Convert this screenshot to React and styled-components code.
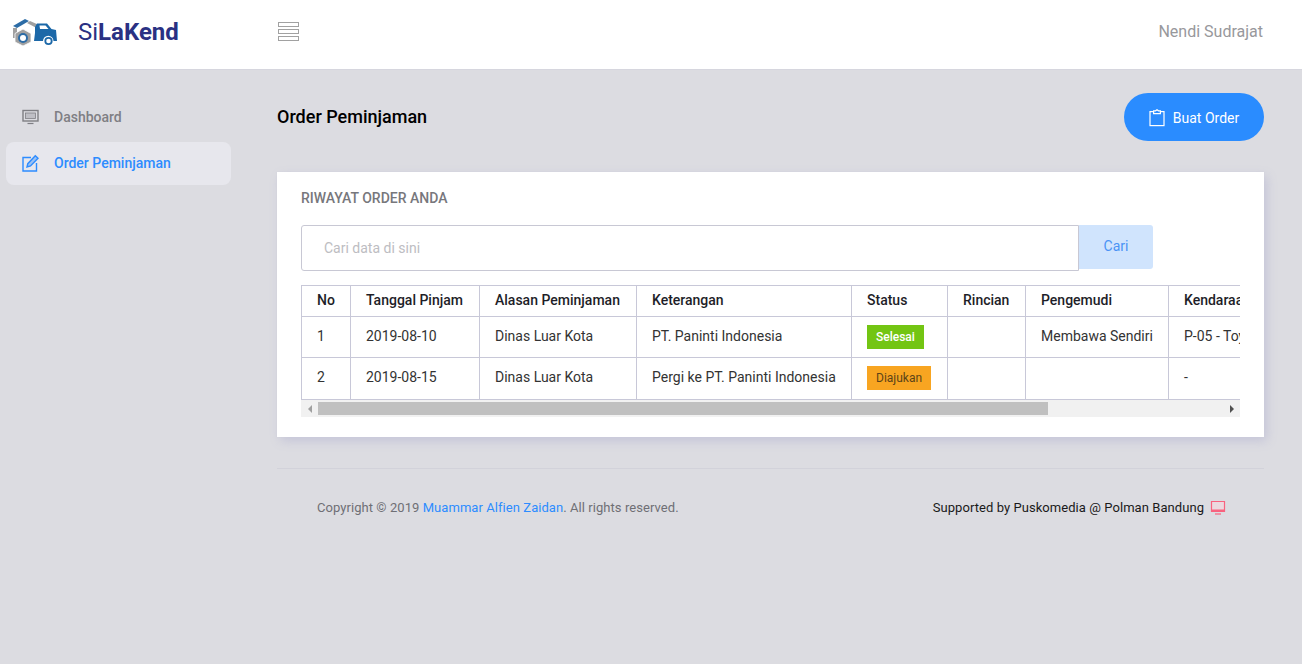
import React from 'react';
import styled, { createGlobalStyle } from 'styled-components';

const GlobalStyle = createGlobalStyle`
  html, body {
    margin: 0;
    padding: 0;
    background: #dcdce1;
    font-family: "Roboto", "Liberation Sans", sans-serif;
    overflow: hidden;
  }
  * {
    box-sizing: border-box;
  }
`;

const Page = styled.div`
  width: 1302px;
  height: 664px;
  background: #dcdce1;
`;

const Header = styled.header`
  display: flex;
  align-items: center;
  height: 70px;
  padding: 0 39px 6px 12px;
  background: #fff;
  border-bottom: 1px solid #d6d6de;
`;

const Brand = styled.div`
  display: flex;
  align-items: center;
  width: 266px;
`;

const BrandName = styled.div`
  margin-left: 20px;
  font-size: 24px;
  font-weight: 400;
  color: #2a3183;
  b {
    font-weight: 700;
  }
`;

const Burger = styled.div`
  display: flex;
  flex-direction: column;
  gap: 2px;
  width: 21px;
  span {
    height: 5px;
    border: 1px solid #a1a1a1;
  }
`;

const UserName = styled.div`
  margin-left: auto;
  font-size: 16px;
  color: #98989c;
`;

const Body = styled.div`
  display: flex;
`;

const Sidebar = styled.nav`
  display: flex;
  flex-direction: column;
  gap: 3px;
  width: 277px;
  padding: 25px 46px 0 6px;
`;

const NavItem = styled.div`
  display: flex;
  align-items: center;
  height: ${p => (p.$active ? '43px' : '44px')};
  padding-left: 16px;
  padding-bottom: ${p => (p.$active ? '1px' : '0')};
  border-radius: 8px;
  font-size: 14px;
  font-weight: 500;
  color: ${p => (p.$active ? '#2d8cff' : '#7f7f84')};
  background: ${p => (p.$active ? '#e7e7ed' : 'transparent')};
  svg {
    margin-right: 15px;
  }
`;

const Main = styled.main`
  width: 987px;
`;

const TitleRow = styled.div`
  display: flex;
  align-items: center;
  justify-content: space-between;
  height: 48px;
  margin-top: 23px;
`;

const PageTitle = styled.h1`
  margin: 0 0 2px;
  font-size: 18px;
  font-weight: 500;
  color: #000;
`;

const OrderButton = styled.button`
  display: flex;
  align-items: center;
  justify-content: center;
  gap: 8px;
  width: 140px;
  height: 48px;
  padding: 1px 0 0;
  border: 0;
  border-radius: 24px;
  background: #2a8cff;
  color: #fff;
  font-family: inherit;
  font-size: 14px;
  font-weight: 400;
`;

const Card = styled.section`
  margin-top: 31px;
  height: 265px;
  padding: 17px 24px 0;
  background: #fff;
  box-shadow: 0 0 1px #cfcfdb, 3px 4px 10px #c5c5d8;
`;

const CardTitle = styled.h2`
  margin: 0;
  font-size: 14px;
  line-height: 18px;
  font-weight: 500;
  color: #77777c;
`;

const SearchRow = styled.div`
  display: flex;
  align-items: flex-start;
  margin-top: 18px;
`;

const SearchInput = styled.input`
  width: 778px;
  height: 46px;
  padding: 0 22px;
  border: 1px solid #c8c8d4;
  border-radius: 3px 0 0 3px;
  font-family: inherit;
  font-size: 14px;
  color: #333;
  outline: none;
  &::placeholder {
    color: #bdbdc2;
  }
`;

const SearchButton = styled.button`
  width: 74px;
  height: 44px;
  padding: 0 0 2px;
  border: 0;
  border-radius: 0 3px 3px 0;
  background: #d0e4fd;
  color: #4a93f5;
  font-family: inherit;
  font-size: 14px;
`;

const TableScroll = styled.div`
  margin-top: 14px;
  width: 939px;
  overflow: hidden;
`;

const Table = styled.table`
  width: 1164px;
  table-layout: fixed;
  border-collapse: collapse;
  font-size: 14px;
  color: #333;
  th, td {
    padding: 0 14px 2px 15px;
    border: 1px solid #c8c8d8;
    text-align: left;
    white-space: nowrap;
    overflow: hidden;
  }
  th {
    height: 31px;
    font-weight: 500;
    color: #1e1e28;
  }
  td {
    height: 41px;
  }
  tbody tr:last-child td {
    height: 42px;
    padding-bottom: 3px;
  }
`;

const StatusCell = styled.td`
  && {
    padding-bottom: 0;
  }
  tbody tr:last-child && {
    padding-bottom: 1px;
  }
`;

const Badge = styled.span`
  display: inline-block;
  vertical-align: middle;
  height: 24px;
  padding: 0 9px;
  font-size: 12px;
  line-height: 24px;
  color: ${p => (p.$tone === 'done' ? '#fff' : '#5c4318')};
  font-weight: ${p => (p.$tone === 'done' ? 500 : 400)};
  background: ${p => (p.$tone === 'done' ? '#73c513' : '#f8a521')};
`;

const ScrollBar = styled.div`
  display: flex;
  height: 17px;
  background: #f1f1f1;
`;

const ScrollArrow = styled.div`
  display: flex;
  align-items: center;
  justify-content: center;
  flex: 0 0 17px;
  &::before {
    content: '';
    border-style: solid;
    border-width: 4px 0 4px 4px;
    border-color: transparent transparent transparent #505050;
    transform: ${p => (p.$left ? 'rotate(180deg)' : 'none')};
    opacity: ${p => (p.$left ? 0.5 : 1)};
  }
`;

const ScrollTrack = styled.div`
  flex: 1;
  padding-top: 2px;
`;

const ScrollThumb = styled.div`
  height: 13px;
  background: #c0c0c0;
`;

const Footer = styled.footer`
  display: flex;
  align-items: center;
  justify-content: space-between;
  margin-top: 31px;
  height: 78px;
  padding: 0 38px 0 40px;
  border-top: 1px solid #d2d2da;
  font-size: 13px;
  letter-spacing: 0.06px;
`;

const Copyright = styled.div`
  color: #6f6f75;
  a {
    color: #2d8cff;
    text-decoration: none;
  }
`;

const Support = styled.div`
  display: flex;
  align-items: center;
  gap: 6px;
  color: #1a1a1a;
`;

const LogoIcon = () => (
  <svg width="46" height="28" viewBox="0 0 46 28">
    <path d="M1 8 L13 1 L17 3 L5 10 Z" fill="#2c6ca6" />
    <path d="M1 10 L5 10 L5 20 L1 20 Z" fill="#a0a0a0" />
    <path d="M15 5 L18 3 L27 7 L25.5 10.5 Z" fill="#a0a0a0" />
    <path d="M23 9 L25 5.5 L35 5.5 L39.5 11 L44 12 L45 23 L41.5 23 A5 5 0 0 0 31 23 L22 23 L23 15 Z" fill="#1c68a8" />
    <path d="M27.5 7.5 H33.5 L36.5 11 H28 Z" fill="#fff" />
    <circle cx="36.5" cy="23" r="3.2" fill="#fff" stroke="#1c68a8" strokeWidth="1.8" />
    <path d="M11 11 L19 15.5 V24 L11 28 L3 24 V15.5 Z" fill="#a0a0a0" stroke="#fff" strokeWidth="0.8" />
    <circle cx="11" cy="20" r="5" fill="#2c6ca6" />
    <circle cx="11" cy="20" r="3" fill="#fff" />
  </svg>
);

const MonitorIcon = () => (
  <svg width="17" height="18" viewBox="0 0 17 18" fill="none" stroke="#7f7f84">
    <rect x="1" y="2.5" width="15" height="10.5" strokeWidth="1.4" />
    <rect x="3.5" y="5" width="10" height="5.5" fill="#7f7f84" fillOpacity="0.3" strokeWidth="0.8" />
    <path d="M5.5 15.5 H11.5" strokeWidth="1.2" />
  </svg>
);

const SupportIcon = () => (
  <svg width="16" height="16" viewBox="0 0 16 16" fill="none" stroke="#f8637f" strokeWidth="1.2">
    <path d="M1.5 1.5 H14.5 V11.5 H1.5 Z" fill="#fbd5dd" fillOpacity="0.5" />
    <path d="M1 10.5 H15" strokeWidth="2" />
    <path d="M5 14 H11" />
  </svg>
);

const EditIcon = () => (
  <svg width="17" height="18" viewBox="0 0 17 18" fill="none" stroke="#2d8cff" strokeWidth="1.4">
    <path d="M9 3.5 H1 V17 H14.5 V9" />
    <path d="M5 13 L5.8 9.7 L13.3 1.8 L16 4.3 L8.5 12 Z" fill="#2d8cff" fillOpacity="0.4" />
  </svg>
);

const ClipboardIcon = () => (
  <svg width="16" height="18" viewBox="0 0 16 18" fill="none" stroke="#fff" strokeWidth="1.2">
    <rect x="1" y="2.6" width="14" height="14" />
    <path d="M4.6 4.6 V1.8 H6.5 L8 .8 L9.5 1.8 H11.4 V4.6 Z" fill="#2a8cff" />
  </svg>
);

const columns = [
  { label: 'No', width: 49 },
  { label: 'Tanggal Pinjam', width: 129 },
  { label: 'Alasan Peminjaman', width: 157 },
  { label: 'Keterangan', width: 215 },
  { label: 'Status', width: 96 },
  { label: 'Rincian', width: 78 },
  { label: 'Pengemudi', width: 143 },
  { label: 'Kendaraan', width: 297 },
];

const orders = [
  {
    no: 1,
    date: '2019-08-10',
    reason: 'Dinas Luar Kota',
    note: 'PT. Paninti Indonesia',
    status: 'Selesai',
    tone: 'done',
    driver: 'Membawa Sendiri',
    vehicle: 'P-05 - Toyota Avanza',
  },
  {
    no: 2,
    date: '2019-08-15',
    reason: 'Dinas Luar Kota',
    note: 'Pergi ke PT. Paninti Indonesia',
    status: 'Diajukan',
    tone: 'pending',
    driver: '',
    vehicle: '-',
  },
];

export default function App() {
  return (
    <Page>
      <GlobalStyle />
      <Header>
        <Brand>
          <LogoIcon />
          <BrandName>Si<b>LaKend</b></BrandName>
        </Brand>
        <Burger>
          <span />
          <span />
          <span />
        </Burger>
        <UserName>Nendi Sudrajat</UserName>
      </Header>
      <Body>
        <Sidebar>
          <NavItem>
            <MonitorIcon />
            Dashboard
          </NavItem>
          <NavItem $active>
            <EditIcon />
            Order Peminjaman
          </NavItem>
        </Sidebar>
        <Main>
          <TitleRow>
            <PageTitle>Order Peminjaman</PageTitle>
            <OrderButton>
              <ClipboardIcon />
              Buat Order
            </OrderButton>
          </TitleRow>
          <Card>
            <CardTitle>RIWAYAT ORDER ANDA</CardTitle>
            <SearchRow>
              <SearchInput placeholder="Cari data di sini" />
              <SearchButton>Cari</SearchButton>
            </SearchRow>
            <TableScroll>
              <Table>
                <colgroup>
                  {columns.map(column => (
                    <col key={column.label} width={column.width} />
                  ))}
                </colgroup>
                <thead>
                  <tr>
                    {columns.map(column => (
                      <th key={column.label}>{column.label}</th>
                    ))}
                  </tr>
                </thead>
                <tbody>
                  {orders.map(order => (
                    <tr key={order.no}>
                      <td>{order.no}</td>
                      <td>{order.date}</td>
                      <td>{order.reason}</td>
                      <td>{order.note}</td>
                      <StatusCell><Badge $tone={order.tone}>{order.status}</Badge></StatusCell>
                      <td />
                      <td>{order.driver}</td>
                      <td>{order.vehicle}</td>
                    </tr>
                  ))}
                </tbody>
              </Table>
            </TableScroll>
            <ScrollBar>
              <ScrollArrow $left />
              <ScrollTrack>
                <ScrollThumb style={{ width: `${(939 / 1164) * 905}px` }} />
              </ScrollTrack>
              <ScrollArrow />
            </ScrollBar>
          </Card>
          <Footer>
            <Copyright>
              Copyright © 2019 <a href="#top">Muammar Alfien Zaidan</a>. All rights reserved.
            </Copyright>
            <Support>
              Supported by Puskomedia @ Polman Bandung
              <SupportIcon />
            </Support>
          </Footer>
        </Main>
      </Body>
    </Page>
  );
}
